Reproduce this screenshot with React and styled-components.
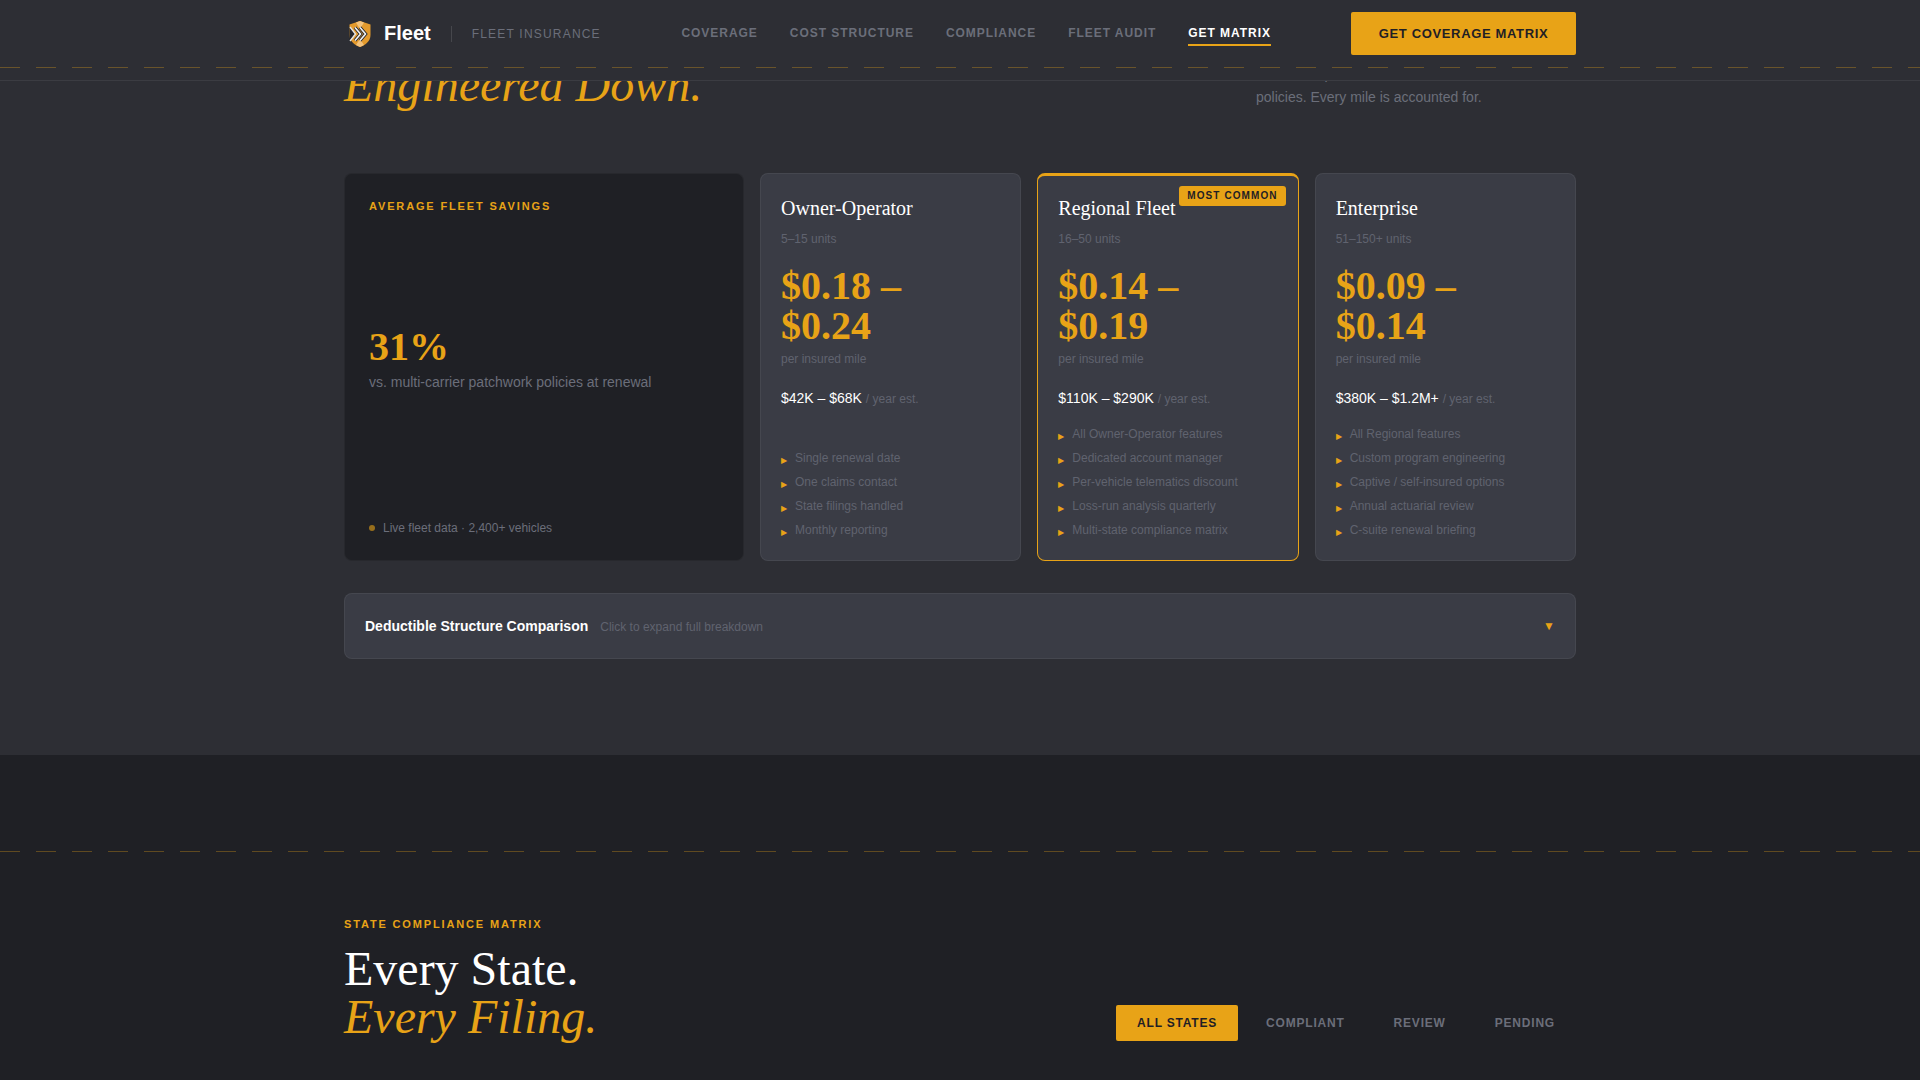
import React from "react";
import styled, { createGlobalStyle } from "styled-components";

const amber = "#e8a317";
const ink = "#1f2025";
const slate = "#2d2e34";
const panel = "#3a3c45";
const muted = "#6b6e7a";
const dim = "#60636f";
const sans = '"Liberation Sans", Arial, sans-serif';
const serif = '"Liberation Serif", "Times New Roman", serif';

const GlobalStyle = createGlobalStyle`
  * {
    box-sizing: border-box;
  }
  html,
  body {
    margin: 0;
    padding: 0;
    background: ${ink};
    font-family: ${sans};
  }
`;

const plans = [
  {
    name: "Owner-Operator",
    units: "5–15 units",
    price: ["$0.18 –", "$0.24"],
    annual: "$42K – $68K",
    features: ["Single renewal date", "One claims contact", "State filings handled", "Monthly reporting"],
  },
  {
    name: "Regional Fleet",
    units: "16–50 units",
    price: ["$0.14 –", "$0.19"],
    annual: "$110K – $290K",
    featured: true,
    features: [
      "All Owner-Operator features",
      "Dedicated account manager",
      "Per-vehicle telematics discount",
      "Loss-run analysis quarterly",
      "Multi-state compliance matrix",
    ],
  },
  {
    name: "Enterprise",
    units: "51–150+ units",
    price: ["$0.09 –", "$0.14"],
    annual: "$380K – $1.2M+",
    features: [
      "All Regional features",
      "Custom program engineering",
      "Captive / self-insured options",
      "Annual actuarial review",
      "C-suite renewal briefing",
    ],
  },
];

const navLinks = ["COVERAGE", "COST STRUCTURE", "COMPLIANCE", "FLEET AUDIT", "GET MATRIX"];
const tabs = ["ALL STATES", "COMPLIANT", "REVIEW", "PENDING"];

function Logo() {
  return (
    <LogoMark width="24" height="28" viewBox="0 0 24 28" fill="none">
      <path d="M12 1 L22.5 4.5 V15 C22.5 21 17.5 25 12 27 C6.5 25 1.5 21 1.5 15 V4.5 Z" fill="#e39a2d" />
      <path d="M12 1 L16 2.4 L12 9 L8 2.4 Z M12 27 L8 25 L12 19 L16 25 Z" fill="#f3c27c" />
      <path d="M1.5 7 L7 14 L1.5 21 Z" fill="#25262b" />
      <path d="M2 7 L7.5 14 L2 21" stroke="#e4e4e4" strokeWidth="1.4" />
      <path d="M7 7.5 L12.5 14 L7 20.5" stroke="#25262b" strokeWidth="3.4" />
      <path d="M7 7.5 L12.5 14 L7 20.5" stroke="#f4f4f4" strokeWidth="1.6" />
      <path d="M12 7.5 L17.5 14 L12 20.5" stroke="#25262b" strokeWidth="3.4" />
      <path d="M12 7.5 L17.5 14 L12 20.5" stroke="#f4f4f4" strokeWidth="1.6" />
    </LogoMark>
  );
}

export default function App() {
  return (
    <Page>
      <GlobalStyle />
      <Nav>
        <NavInner>
          <Brand>
            <Logo />
            <BrandName>Fleet</BrandName>
            <BrandDivider />
            <BrandTag>FLEET INSURANCE</BrandTag>
          </Brand>
          <NavLinks>
            {navLinks.map((link) => (
              <NavLink key={link} $active={link === "GET MATRIX"}>
                {link}
              </NavLink>
            ))}
          </NavLinks>
          <CtaButton>GET COVERAGE MATRIX</CtaButton>
        </NavInner>
      </Nav>

      <Viewport>
        <CostSection>
          <Container>
            <CostHead>
              <Title>
                Cost Per Mile,
                <br />
                <em>Engineered Down.</em>
              </Title>
              <HeadNote>
                Fleet-wide pooled rates instead of stacked carrier policies. Every mile is accounted for.
              </HeadNote>
            </CostHead>

            <PlanGrid>
              <SavingsCard>
                <SavingsLabel>AVERAGE FLEET SAVINGS</SavingsLabel>
                <SavingsBody>
                  <SavingsValue>31%</SavingsValue>
                  <SavingsNote>vs. multi-carrier patchwork policies at renewal</SavingsNote>
                </SavingsBody>
                <LiveRow>
                  <LiveDot />
                  Live fleet data · 2,400+ vehicles
                </LiveRow>
              </SavingsCard>

              {plans.map((plan) => (
                <PlanCard key={plan.name} $featured={plan.featured}>
                  {plan.featured && <Badge>MOST COMMON</Badge>}
                  <PlanName>{plan.name}</PlanName>
                  <PlanUnits>{plan.units}</PlanUnits>
                  <PlanPrice>
                    {plan.price[0]}
                    <br />
                    {plan.price[1]}
                  </PlanPrice>
                  <PlanPer>per insured mile</PlanPer>
                  <PlanAnnual>
                    {plan.annual} <span>/ year est.</span>
                  </PlanAnnual>
                  <FeatureList>
                    {plan.features.map((feature) => (
                      <Feature key={feature}>{feature}</Feature>
                    ))}
                  </FeatureList>
                </PlanCard>
              ))}
            </PlanGrid>

            <Accordion>
              <AccordionText>
                <AccordionTitle>Deductible Structure Comparison</AccordionTitle>
                <AccordionHint>Click to expand full breakdown</AccordionHint>
              </AccordionText>
              <Caret>▼</Caret>
            </Accordion>
          </Container>
        </CostSection>

        <MatrixSection>
          <RoadLine />
          <Container>
            <MatrixHead>
              <div>
                <Eyebrow>STATE COMPLIANCE MATRIX</Eyebrow>
                <Title>
                  Every State.
                  <br />
                  <em>Every Filing.</em>
                </Title>
              </div>
              <Tabs>
                {tabs.map((tab) => (
                  <Tab key={tab} $active={tab === "ALL STATES"}>
                    {tab}
                  </Tab>
                ))}
              </Tabs>
            </MatrixHead>
          </Container>
        </MatrixSection>
      </Viewport>
    </Page>
  );
}

const Page = styled.div`
  height: 100vh;
  display: flex;
  flex-direction: column;
  overflow: hidden;
  background: ${ink};
`;

const Container = styled.div`
  width: 1232px;
  margin: 0 auto;
`;

const Nav = styled.header`
  position: relative;
  flex: none;
  height: 81px;
  background: ${slate};
  border-bottom: 1px solid rgba(255, 255, 255, 0.07);

  &::after {
    content: "";
    position: absolute;
    left: 0;
    right: 0;
    top: 67px;
    height: 1px;
    background: repeating-linear-gradient(90deg, rgba(232, 163, 23, 0.32) 0 20px, transparent 20px 36px);
  }
`;

const NavInner = styled.div`
  width: 1232px;
  height: 67px;
  margin: 0 auto;
  display: flex;
  align-items: center;
`;

const Brand = styled.div`
  display: flex;
  align-items: center;
  padding-left: 4px;
`;

const LogoMark = styled.svg`
  margin-top: 1px;
`;

const BrandName = styled.span`
  margin-left: 12px;
  font-size: 20px;
  font-weight: 700;
  color: #ffffff;
`;

const BrandDivider = styled.span`
  width: 1px;
  height: 16px;
  margin: 0 20px;
  background: rgba(255, 255, 255, 0.12);
`;

const BrandTag = styled.span`
  font-size: 12px;
  letter-spacing: 1.2px;
  color: ${muted};
`;

const NavLinks = styled.nav`
  display: flex;
  gap: 32px;
  margin: 5px 80px 0 auto;
`;

const NavLink = styled.a`
  padding-bottom: 4px;
  border-bottom: 2px solid ${(p) => (p.$active ? amber : "transparent")};
  font-size: 12px;
  font-weight: 700;
  letter-spacing: 0.96px;
  color: ${(p) => (p.$active ? "#ffffff" : muted)};
`;

const CtaButton = styled.button`
  flex: none;
  width: 225px;
  height: 43px;
  border: none;
  border-radius: 2px;
  background: ${amber};
  color: ${ink};
  font-family: ${sans};
  font-size: 13px;
  font-weight: 700;
  letter-spacing: 0.65px;
`;

const Viewport = styled.main`
  flex: 1;
  min-height: 0;
  overflow: hidden;
`;

const CostSection = styled.section`
  background: ${slate};
  padding-bottom: 96px;
`;

const CostHead = styled.div`
  display: flex;
  align-items: flex-end;
  justify-content: space-between;
  margin-top: -68px;
  margin-bottom: 64px;
`;

const Title = styled.h2`
  margin: 0;
  font-family: ${serif};
  font-size: 48px;
  font-weight: 400;
  line-height: 48px;
  color: #ffffff;

  em {
    color: ${amber};
    font-style: italic;
  }
`;

const HeadNote = styled.p`
  width: 320px;
  margin: 0 0 1px;
  font-size: 14px;
  line-height: 22.4px;
  color: ${muted};
`;

const PlanGrid = styled.div`
  display: grid;
  grid-template-columns: 400px repeat(3, 1fr);
  gap: 16px;
`;

const SavingsCard = styled.div`
  display: flex;
  flex-direction: column;
  justify-content: space-between;
  padding: 26px 24px 25px;
  border: 1px solid rgba(255, 255, 255, 0.04);
  border-radius: 8px;
  background: ${ink};
`;

const SavingsLabel = styled.div`
  font-size: 11px;
  font-weight: 700;
  letter-spacing: 1.85px;
  color: ${amber};
`;

const SavingsBody = styled.div`
  padding-bottom: 17px;
`;

const SavingsValue = styled.div`
  font-family: ${serif};
  font-size: 40px;
  font-weight: 700;
  line-height: 40px;
  color: ${amber};
`;

const SavingsNote = styled.div`
  margin-top: 7px;
  font-size: 14px;
  color: ${muted};
`;

const LiveRow = styled.div`
  display: flex;
  align-items: center;
  gap: 8px;
  font-size: 12px;
  color: ${muted};
`;

const LiveDot = styled.span`
  width: 6px;
  height: 6px;
  border-radius: 50%;
  background: ${amber};
  opacity: 0.6;
`;

const PlanCard = styled.article`
  position: relative;
  display: flex;
  flex-direction: column;
  padding: ${(p) => (p.$featured ? "21px" : "23px")} 20px 23px;
  border: 1px solid ${(p) => (p.$featured ? amber : "rgba(255, 255, 255, 0.06)")};
  border-top-width: ${(p) => (p.$featured ? "3px" : "1px")};
  border-radius: 8px;
  background: ${panel};
`;

const Badge = styled.span`
  position: absolute;
  top: 10px;
  right: 12px;
  height: 20px;
  padding: 0 8px;
  border-radius: 3px;
  background: ${amber};
  color: ${ink};
  font-size: 10px;
  font-weight: 700;
  line-height: 20px;
  letter-spacing: 1.1px;
`;

const PlanName = styled.h3`
  margin: 0;
  font-family: ${serif};
  font-size: 20px;
  font-weight: 400;
  color: #ffffff;
`;

const PlanUnits = styled.div`
  margin-top: 12px;
  font-size: 12px;
  color: ${dim};
`;

const PlanPrice = styled.div`
  margin-top: 20px;
  font-family: ${serif};
  font-size: 40px;
  font-weight: 700;
  line-height: 40px;
  color: ${amber};
`;

const PlanPer = styled.div`
  margin-top: 6px;
  font-size: 12px;
  color: ${dim};
`;

const PlanAnnual = styled.div`
  margin-top: 24px;
  font-size: 14px;
  color: #ffffff;

  span {
    font-size: 12px;
    color: ${dim};
  }
`;

const FeatureList = styled.ul`
  display: flex;
  flex-direction: column;
  gap: 10px;
  margin: auto 0 0;
  padding: 21px 0 0;
  list-style: none;
`;

const Feature = styled.li`
  display: flex;
  align-items: center;
  gap: 7px;
  font-size: 12px;
  color: ${dim};

  &::before {
    content: "▶";
    width: 7px;
    padding-top: 4px;
    font-size: 8px;
    color: ${amber};
  }
`;

const Accordion = styled.div`
  display: flex;
  align-items: center;
  justify-content: space-between;
  height: 66px;
  margin-top: 32px;
  padding: 0 20px;
  border: 1px solid rgba(255, 255, 255, 0.06);
  border-radius: 8px;
  background: ${panel};
`;

const AccordionText = styled.div`
  display: flex;
  align-items: center;
  gap: 12px;
`;

const AccordionTitle = styled.span`
  font-size: 14px;
  font-weight: 700;
  color: #ffffff;
`;

const AccordionHint = styled.span`
  padding-top: 1px;
  font-size: 12px;
  color: ${dim};
`;

const Caret = styled.span`
  font-size: 12px;
  color: ${amber};
`;

const MatrixSection = styled.section`
  padding-top: 96px;
  background: ${ink};
`;

const RoadLine = styled.div`
  height: 1px;
  background: repeating-linear-gradient(90deg, rgba(232, 163, 23, 0.32) 0 20px, transparent 20px 36px);
`;

const MatrixHead = styled.div`
  display: flex;
  align-items: flex-end;
  justify-content: space-between;
  padding-top: 66px;
`;

const Eyebrow = styled.div`
  margin-bottom: 15px;
  font-size: 11px;
  font-weight: 700;
  letter-spacing: 1.85px;
  color: ${amber};
`;

const Tabs = styled.div`
  display: flex;
  gap: 7px;
`;

const Tab = styled.button`
  height: 36px;
  padding: 0 21px;
  border: none;
  border-radius: 2px;
  background: ${(p) => (p.$active ? amber : "transparent")};
  color: ${(p) => (p.$active ? ink : muted)};
  font-family: ${sans};
  font-size: 12px;
  font-weight: 700;
  letter-spacing: 0.8px;
`;
